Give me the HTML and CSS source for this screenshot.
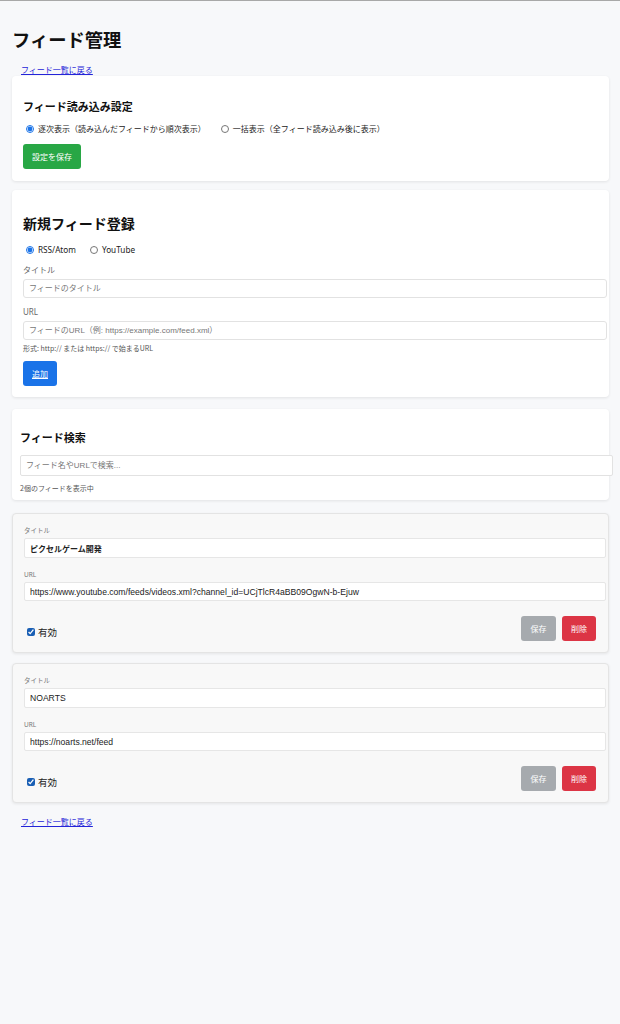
FILE: index.html
```html
<!DOCTYPE html>
<html lang="ja">
<head>
<meta charset="utf-8">
<title>フィード管理</title>
<link rel="stylesheet" href="styles.css">
</head>
<body>
<h1 class="page-title">フィード管理</h1>
<a class="back-link" href="#">フィード一覧に戻る</a>

<section class="card card-settings">
  <h3 class="card-title-sm">フィード読み込み設定</h3>
  <div class="radio-row">
    <label class="radio"><input type="radio" name="mode" checked><span>逐次表示（読み込んだフィードから順次表示）</span></label>
    <label class="radio"><input type="radio" name="mode"><span>一括表示（全フィード読み込み後に表示）</span></label>
  </div>
  <button class="btn btn-green">設定を保存</button>
</section>

<section class="card card-new">
  <h2 class="card-title-lg">新規フィード登録</h2>
  <div class="radio-row radio-row-new">
    <label class="radio latin"><input type="radio" name="type" checked><span>RSS/Atom</span></label>
    <label class="radio latin"><input type="radio" name="type"><span>YouTube</span></label>
  </div>
  <label class="field-label">タイトル</label>
  <input class="text-input" type="text" placeholder="フィードのタイトル">
  <label class="field-label field-label-url">URL</label>
  <input class="text-input" type="text" placeholder="フィードのURL（例: https://example.com/feed.xml）">
  <p class="hint">形式: http:// または https:// で始まるURL</p>
  <button class="btn btn-blue">追加</button>
</section>

<section class="card card-search">
  <h3 class="card-title-sm">フィード検索</h3>
  <input class="text-input search-input" type="text" placeholder="フィード名やURLで検索...">
  <p class="count">2個のフィードを表示中</p>
</section>

<section class="feed-card feed-first">
  <label class="feed-label">タイトル</label>
  <input class="feed-input feed-title" type="text" value="ピクセルゲーム開発">
  <label class="feed-label feed-label-url">URL</label>
  <input class="feed-input" type="text" value="https://www.youtube.com/feeds/videos.xml?channel_id=UCjTlcR4aBB09OgwN-b-Ejuw">
  <div class="feed-actions">
    <label class="check"><input type="checkbox" checked><span>有効</span></label>
    <div class="btn-group">
      <button class="btn btn-gray">保存</button>
      <button class="btn btn-red">削除</button>
    </div>
  </div>
</section>

<section class="feed-card feed-second">
  <label class="feed-label">タイトル</label>
  <input class="feed-input" type="text" value="NOARTS">
  <label class="feed-label feed-label-url">URL</label>
  <input class="feed-input" type="text" value="https://noarts.net/feed">
  <div class="feed-actions">
    <label class="check"><input type="checkbox" checked><span>有効</span></label>
    <div class="btn-group">
      <button class="btn btn-gray">保存</button>
      <button class="btn btn-red">削除</button>
    </div>
  </div>
</section>

<a class="back-link back-link-bottom" href="#">フィード一覧に戻る</a>
</body>
</html>
```

FILE: styles.css
```css
html {
  background: #f7f8fa;
}
body {
  margin: 0;
  padding: 12px 11px 40px 12px;
  border-top: 1px solid #a8a8a8;
  font-family: "Noto Sans", "Noto Sans CJK JP", sans-serif;
  color: #222;
  background: #f7f8fa;
}
.page-title {
  font-family: "Noto Sans CJK JP", sans-serif;
  font-size: 18.3px;
  line-height: 26px;
  font-weight: 700;
  margin: 13px 0 12px 0;
  color: #111;
}
.back-link {
  display: block;
  font-family: "Noto Sans CJK JP", sans-serif;
  font-size: 8px;
  line-height: 12px;
  padding-left: 9px;
  color: #2424d8;
  text-decoration: underline;
}
.back-link-bottom {
  margin-top: 13px;
}
.card {
  background: #fff;
  border-radius: 4px;
  box-shadow: 0 1px 3px rgba(0, 0, 0, 0.09);
}
.card-settings {
  padding: 12px 11px 12px 11px;
}
.card-new {
  margin-top: 9px;
  padding: 12px 11px 11px 11px;
}
.card-search {
  margin-top: 12px;
  padding: 8px 8px 7px 8px;
}
.card-title-sm {
  font-family: "Noto Sans CJK JP", sans-serif;
  font-size: 11px;
  line-height: 16px;
  font-weight: 700;
  margin: 10px 0 9px 0;
  color: #111;
}
.card-search .card-title-sm {
  margin: 12px 0 10px 0;
}
.card-title-lg {
  font-family: "Noto Sans CJK JP", sans-serif;
  font-size: 14px;
  line-height: 20px;
  font-weight: 700;
  margin: 11px 0 11px 0;
  color: #111;
}
.radio-row {
  display: flex;
  gap: 12px;
  height: 12px;
  align-items: center;
}
.radio-row-new {
  gap: 11px;
}
.radio {
  display: flex;
  align-items: center;
  gap: 4px;
  font-family: "Noto Sans CJK JP", sans-serif;
  font-size: 8px;
  line-height: 12px;
  color: #222;
}
.radio.latin {
  font-family: "Noto Sans", "Noto Sans CJK JP", sans-serif;
  font-size: 8.2px;
}
.radio input {
  width: 8px;
  height: 8px;
  margin: 0 0 0 3px;
  accent-color: #1a73e8;
}
.btn {
  display: inline-block;
  border: none;
  border-radius: 3px;
  color: #fff;
  font-family: "Noto Sans CJK JP", sans-serif;
  font-size: 8px;
  height: 25px;
  padding: 0 9px;
  line-height: 25px;
}
.btn-green {
  margin-top: 9px;
  background: #28a745;
  width: 58px;
}
.btn-blue {
  margin-top: 8px;
  background: #1a73e8;
  width: 34px;
  padding: 0;
  text-decoration: underline;
}
.btn-gray {
  background: #a6aaae;
  width: 35px;
  padding: 0;
}
.btn-red {
  background: #dc3545;
  width: 34px;
  padding: 0;
}
.field-label {
  display: block;
  margin-top: 8px;
  font-family: "Noto Sans CJK JP", sans-serif;
  font-size: 8px;
  line-height: 12px;
  color: #666;
}
.field-label-url {
  font-family: "Noto Sans", "Noto Sans CJK JP", sans-serif;
}
.text-input {
  display: block;
  box-sizing: border-box;
  width: calc(100% + 9px);
  height: 19px;
  margin-top: 3px;
  padding: 0 5px;
  border: 1px solid #e2e2e2;
  border-radius: 3px;
  background: #fff;
  font-family: "Liberation Sans", "Noto Sans CJK JP", sans-serif;
  font-size: 8px;
  color: #222;
}
.text-input::placeholder {
  color: #777;
}
.search-input {
  width: calc(100% + 12px);
  height: 21px;
  margin-top: 0;
  border-radius: 2px;
}
.hint {
  margin: 3px 0 0 0;
  font-family: "Noto Sans CJK JP", sans-serif;
  font-size: 7px;
  line-height: 10px;
  color: #555;
}
.count {
  margin: 7px 0 0 0;
  font-family: "Noto Sans CJK JP", sans-serif;
  font-size: 7px;
  line-height: 10px;
  color: #555;
}
.feed-card {
  background: #f8f8f8;
  border: 1px solid #e4e4e4;
  border-radius: 4px;
  box-shadow: 0 1px 3px rgba(0, 0, 0, 0.08);
  padding: 11px 12px 11px 11px;
  width: calc(100% - 25px);
}
.feed-first {
  margin-top: 13px;
}
.feed-second {
  margin-top: 10px;
}
.feed-label {
  display: block;
  font-family: "Noto Sans CJK JP", sans-serif;
  font-size: 6.5px;
  line-height: 10px;
  color: #777;
}
.feed-label-url {
  margin-top: 12px;
  font-family: "Noto Sans", "Noto Sans CJK JP", sans-serif;
}
.feed-input {
  display: block;
  box-sizing: border-box;
  width: calc(100% + 10px);
  height: 20px;
  margin-top: 3px;
  padding: 0 5px;
  border: 1px solid #e6e6e6;
  border-radius: 2px;
  background: #fff;
  font-family: "Liberation Sans", "Noto Sans CJK JP", sans-serif;
  font-size: 8.6px;
  color: #222;
}
.feed-label-url + .feed-input {
  margin-top: 2px;
  height: 19px;
}
.feed-title {
  font-family: "Noto Sans CJK JP", sans-serif;
  font-weight: 700;
  font-size: 8px;
}
.feed-actions {
  display: flex;
  align-items: center;
  justify-content: space-between;
  margin-top: 15px;
  height: 25px;
}
.check {
  display: flex;
  align-items: center;
  gap: 3px;
  margin-top: 7px;
  font-family: "Noto Sans CJK JP", sans-serif;
  font-size: 9.5px;
  color: #222;
}
.check input {
  width: 8px;
  height: 8px;
  margin: 0 0 0 3px;
  accent-color: #1a5fb4;
}
.btn-group {
  display: flex;
  gap: 6px;
}
```
